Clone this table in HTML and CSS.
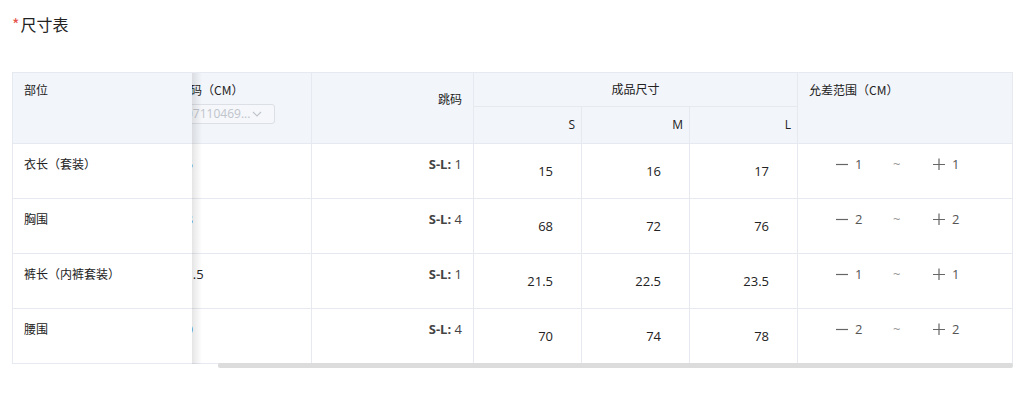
FILE: index.html
```html
<!DOCTYPE html>
<html lang="zh-CN">
<head>
<meta charset="utf-8">
<title>尺寸表</title>
<link rel="stylesheet" href="styles.css">
</head>
<body>
<div class="page">
  <div class="title"><span class="req">*</span>尺寸表</div>
  <div class="table">
    <div class="table-main">
      <div class="fixed">
        <div class="cell head fx-head">部位</div>
        <div class="cell fx">衣长（套装）</div>
        <div class="cell fx">胸围</div>
        <div class="cell fx">裤长（内裤套装）</div>
        <div class="cell fx">腰围</div>
      </div>
      <div class="scroller">
        <div class="grid">
          <div class="cell head h-base">
            <div class="h-label">基码（CM）</div>
            <div class="select">
              <span class="select-text">07110469...</span>
              <svg class="chev" width="10" height="6" viewBox="0 0 10 6"><path d="M1 1l4 4 4-4" fill="none" stroke="#c0c4cc" stroke-width="1.1"/></svg>
            </div>
          </div>
          <div class="cell head h-jump">跳码</div>
          <div class="cell head h-size">成品尺寸</div>
          <div class="cell head h-tol">允差范围（CM）</div>
          <div class="cell head h-sub">S</div>
          <div class="cell head h-sub">M</div>
          <div class="cell head h-sub">L</div>

          <div class="cell v-base">15</div>
          <div class="cell v-jump"><b>S-L:</b> 1</div>
          <div class="cell v-num">15</div>
          <div class="cell v-num">16</div>
          <div class="cell v-num">17</div>
          <div class="cell v-tol"><span class="tol-a"><svg class="sign" width="12" height="12" viewBox="0 0 12 12"><path d="M0 6.5h12" stroke="#666" stroke-width="1.2"/></svg>1</span><span class="tol-sep">~</span><span class="tol-b"><svg class="sign" width="12" height="12" viewBox="0 0 12 12"><path d="M0 6.5h12M6 0.5v12" stroke="#666" stroke-width="1.2"/></svg>1</span></div>

          <div class="cell v-base">68</div>
          <div class="cell v-jump"><b>S-L:</b> 4</div>
          <div class="cell v-num">68</div>
          <div class="cell v-num">72</div>
          <div class="cell v-num">76</div>
          <div class="cell v-tol"><span class="tol-a"><svg class="sign" width="12" height="12" viewBox="0 0 12 12"><path d="M0 6.5h12" stroke="#666" stroke-width="1.2"/></svg>2</span><span class="tol-sep">~</span><span class="tol-b"><svg class="sign" width="12" height="12" viewBox="0 0 12 12"><path d="M0 6.5h12M6 0.5v12" stroke="#666" stroke-width="1.2"/></svg>2</span></div>

          <div class="cell v-base">21.5</div>
          <div class="cell v-jump"><b>S-L:</b> 1</div>
          <div class="cell v-num">21.5</div>
          <div class="cell v-num">22.5</div>
          <div class="cell v-num">23.5</div>
          <div class="cell v-tol"><span class="tol-a"><svg class="sign" width="12" height="12" viewBox="0 0 12 12"><path d="M0 6.5h12" stroke="#666" stroke-width="1.2"/></svg>1</span><span class="tol-sep">~</span><span class="tol-b"><svg class="sign" width="12" height="12" viewBox="0 0 12 12"><path d="M0 6.5h12M6 0.5v12" stroke="#666" stroke-width="1.2"/></svg>1</span></div>

          <div class="cell v-base">70</div>
          <div class="cell v-jump"><b>S-L:</b> 4</div>
          <div class="cell v-num">70</div>
          <div class="cell v-num">74</div>
          <div class="cell v-num">78</div>
          <div class="cell v-tol"><span class="tol-a"><svg class="sign" width="12" height="12" viewBox="0 0 12 12"><path d="M0 6.5h12" stroke="#666" stroke-width="1.2"/></svg>2</span><span class="tol-sep">~</span><span class="tol-b"><svg class="sign" width="12" height="12" viewBox="0 0 12 12"><path d="M0 6.5h12M6 0.5v12" stroke="#666" stroke-width="1.2"/></svg>2</span></div>
        </div>
      </div>
    </div>
    <div class="scrollbar"><div class="thumb"></div></div>
  </div>
</div>
</body>
</html>
```

FILE: styles.css
```css
* { box-sizing: border-box; }
html, body { margin: 0; padding: 0; background: #fff; }
body {
  font-family: "Open Sans", "Noto Sans CJK SC", sans-serif;
  color: #222;
}
.page { padding: 12px 0 0 12px; width: 1013px; }
.title {
  font-family: "Noto Sans CJK SC", sans-serif;
  font-size: 16px;
  line-height: 24px;
  height: 24px;
  color: #222;
}
.req { color: #e5534b; margin-right: 1px; }
.table {
  margin-top: 36px;
  width: 1001px;
}
.table-main {
  display: flex;
  border-top: 1px solid #e6e9ef;
  border-left: 1px solid #e6e9ef;
}
.cell {
  border-bottom: 1px solid #e6e9ef;
  font-size: 12px;
  line-height: 18px;
}
.head { background: #f2f5fa; color: #222; }
.fixed {
  width: 179px;
  flex: none;
  position: relative;
  z-index: 1;
  background: #fff;
  display: grid;
  grid-template-rows: 71px repeat(4, 55px);
}
.fixed::after {
  content: "";
  position: absolute;
  top: 0;
  bottom: 0;
  left: 100%;
  width: 10px;
  background: linear-gradient(to right, rgba(0,0,0,0.10), rgba(0,0,0,0));
  pointer-events: none;
}
.fx-head {
  padding: 8px 11px;
  font-family: "Noto Sans CJK SC", sans-serif;
}
.fx {
  font-family: "Noto Sans CJK SC", sans-serif;
  padding: 11px 11px;
  color: #222;
}
.scroller {
  width: 821px;
  overflow: hidden;
}
.grid {
  width: 847px;
  margin-left: -26px;
  display: grid;
  grid-template-columns: 146px 162px 108px 108px 108px 215px;
  grid-template-rows: 34px 37px repeat(4, 55px);
}
.grid .cell { border-right: 1px solid #e6e9ef; }
.h-base {
  grid-column: 1;
  grid-row: 1 / 3;
  padding: 8px 12px;
  font-family: "Noto Sans CJK SC", sans-serif;
}
.select {
  margin-top: 5px;
  width: 97px;
  height: 20px;
  border: 1px solid #dcdfe6;
  border-radius: 3px;
  background: #f5f7fa;
  display: flex;
  align-items: center;
  padding: 0 12px 0 7px;
  justify-content: space-between;
}
.select-text {
  font-family: "Open Sans", sans-serif;
  font-size: 12px;
  color: #c0c4cc;
  line-height: 18px;
}
.chev { flex: none; }
.h-jump {
  grid-column: 2;
  grid-row: 1 / 3;
  text-align: right;
  padding: 17px 11px 0 0;
  font-family: "Noto Sans CJK SC", sans-serif;
}
.h-size {
  grid-column: 3 / 6;
  grid-row: 1;
  display: flex;
  align-items: center;
  justify-content: center;
  font-family: "Noto Sans CJK SC", sans-serif;
  padding-bottom: 2px;
}
.h-tol {
  grid-column: 6;
  grid-row: 1 / 3;
  padding: 8px 11px;
  font-family: "Noto Sans CJK SC", sans-serif;
}
.h-sub {
  grid-row: 2;
  display: flex;
  align-items: center;
  justify-content: flex-end;
  padding-right: 6px;
  font-size: 12px;
}
.v-base {
  padding: 11px 12px;
  font-size: 13px;
}
.v-jump {
  text-align: right;
  padding: 11px 11px 0 0;
  font-family: "Open Sans", sans-serif;
  font-size: 13px;
  color: #444;
}
.v-jump b {
  font-family: "Open Sans", sans-serif;
  font-weight: 700;
  color: #444;
}
.v-num {
  display: flex;
  align-items: center;
  justify-content: flex-end;
  padding: 0 28px 0 0;
  font-size: 13px;
  color: #222;
}
.v-tol {
  display: flex;
  align-items: flex-start;
  padding: 11px 0 0 38px;
  font-size: 13px;
  color: #555;
}
.sign {
  flex: none;
  margin-right: 7px;
}
.tol-a { width: 57px; display: flex; align-items: center; height: 18px; }
.tol-sep { width: 40px; color: #999; }
.tol-b { display: flex; align-items: center; height: 18px; }
.scrollbar {
  margin-top: -1px;
  height: 5px;
  display: flex;
}
.thumb {
  margin-left: 206px;
  flex: 1;
  background: #dcdcdc;
  border-radius: 2px;
}
```
